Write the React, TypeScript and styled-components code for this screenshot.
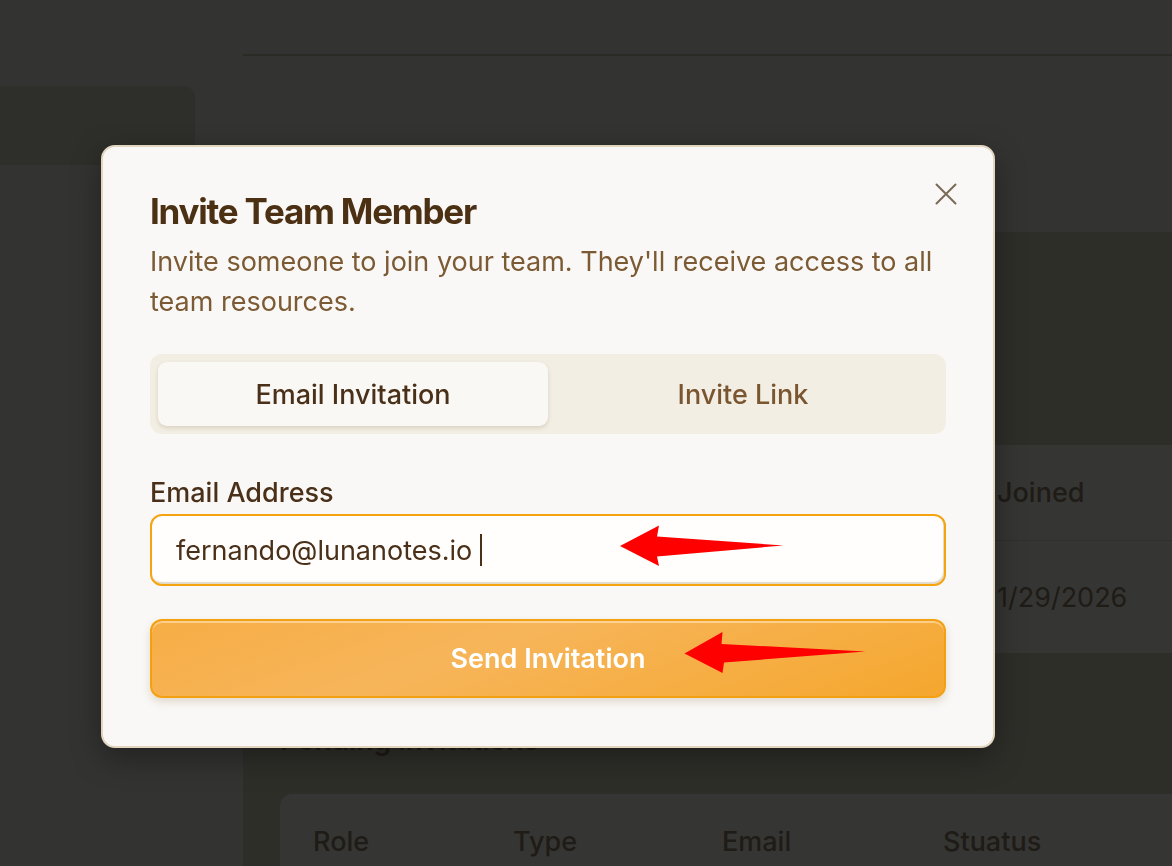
import React from 'react';
import styled, { createGlobalStyle } from 'styled-components';

const GlobalStyle = createGlobalStyle`
  * { box-sizing: border-box; }
  body {
    margin: 0;
    overflow: hidden;
    font-family: Inter, "Noto Sans", sans-serif;
    background: #2e2e29;
  }
`;

const App: React.FC = () => {
  return (
    <>
      <GlobalStyle />
      <Page>
        <Sidebar>
          <NavItem $active />
        </Sidebar>

        <Main>
          <TopBar />
          <Intro />
          <Content>
            {/* members table, mostly hidden behind the dialog */}
            <MembersSection>
              <TableCard>
                <MembersRow $head>
                  <Cell $head />
                  <Cell $head />
                  <Cell $head />
                  <Cell $head>Joined</Cell>
                </MembersRow>
                <MembersRow>
                  <Cell />
                  <Cell />
                  <Cell />
                  <Cell>1/29/2026</Cell>
                </MembersRow>
              </TableCard>
            </MembersSection>

            <PendingSection>
              <SectionTitle>Pending Invitations</SectionTitle>
              <TableCard $gap={33}>
                <PendingRow $head>
                  <Cell $head>Role</Cell>
                  <Cell $head>Type</Cell>
                  <Cell $head>Email</Cell>
                  <Cell $head>Stuatus</Cell>
                </PendingRow>
              </TableCard>
            </PendingSection>
          </Content>
        </Main>
      </Page>

      <Overlay>
        <Modal>
          <CloseButton aria-label="Close">
            <svg width="24" height="24" viewBox="0 0 24 24" fill="none">
              <path d="M2.5 2.5L21.5 21.5M21.5 2.5L2.5 21.5" stroke="#7a6a58" strokeWidth="2" strokeLinecap="round" />
            </svg>
          </CloseButton>

          <Title>Invite Team Member</Title>
          <Description>
            Invite someone to join your team. They'll receive access to all team resources.
          </Description>

          <Tabs>
            <Tab $active>Email Invitation</Tab>
            <Tab>Invite Link</Tab>
          </Tabs>

          <FieldLabel>Email Address</FieldLabel>
          <EmailInput role="textbox">
            fernando@lunanotes.io&nbsp;
            <Caret />
          </EmailInput>

          <SendButton>Send Invitation</SendButton>
        </Modal>
      </Overlay>

      {/* red annotation arrows drawn over the screenshot */}
      <Annotations width="1172" height="866" viewBox="0 0 1172 866">
        <polygon points="620,546 659,525.5 657,536.5 783.5,545.5 657,556.5 659,566" fill="#ff0000" />
        <polygon points="684.5,653.5 722.5,632 721.5,644 865.5,651.5 724,662.5 722.5,673" fill="#ff0000" />
      </Annotations>
    </>
  );
};

const Page = styled.div`
  display: grid;
  grid-template-columns: 243px 1fr;
  height: 866px;
  overflow: hidden;
`;

const Sidebar = styled.aside`
  background: #333331;
  padding-top: 86px;
`;

const NavItem = styled.div<{ $active?: boolean }>`
  width: 195px;
  height: 79px;
  border-radius: 0 12px 12px 0;
  background: ${p => (p.$active ? '#2e2e2a' : 'transparent')};
`;

const Main = styled.main`
  display: flex;
  flex-direction: column;
  min-width: 0;
`;

const TopBar = styled.header`
  height: 56px;
  background: #333331;
  border-bottom: 2px solid #2b2b26;
`;

const Intro = styled.div`
  height: 176px;
  background: #333331;
`;

const Content = styled.div`
  flex: 1;
  background: #2e2e29;
  padding-left: 37px;
`;

const MembersSection = styled.section`
  padding-top: 213px;
`;

const PendingSection = styled.section`
  padding-top: 66px;
`;

const SectionTitle = styled.h2`
  margin: 0;
  font-size: 28px;
  line-height: 42px;
  font-weight: 600;
  color: #1f1b16;
`;

const TableCard = styled.div<{ $gap?: number }>`
  margin-top: ${p => p.$gap ?? 0}px;
  background: #353533;
  border-radius: 12px 0 0 12px;
  padding-left: 33px;
`;

const MembersRow = styled.div<{ $head?: boolean }>`
  display: grid;
  grid-template-columns: 240px 260px 184px 1fr;
  align-items: center;
  height: ${p => (p.$head ? '95px' : '113px')};
  border-top: ${p => (p.$head ? 'none' : '1px solid #2e2e2b')};
`;

const PendingRow = styled(MembersRow)`
  grid-template-columns: 200px 209px 221px 1fr;
`;

const Cell = styled.div<{ $head?: boolean }>`
  font-size: 27px;
  font-weight: ${p => (p.$head ? 500 : 400)};
  color: #1f1b16;
  white-space: nowrap;
`;

const Overlay = styled.div`
  position: fixed;
  inset: 0;
  padding: 145px 0 0 101px;
`;

const Modal = styled.div`
  position: relative;
  width: 894px;
  background: #f9f8f6;
  border: 2px solid #e2d6bf;
  border-radius: 14px;
  padding: 43px 47px 48px;
  box-shadow: 0 10px 30px rgba(0, 0, 0, 0.35);
`;

const CloseButton = styled.button`
  position: absolute;
  top: 35px;
  right: 35px;
  width: 24px;
  height: 24px;
  padding: 0;
  border: none;
  background: none;
  display: flex;
  cursor: pointer;
`;

const Title = styled.h2`
  margin: 0;
  font-size: 35px;
  line-height: 43px;
  font-weight: 700;
  letter-spacing: -0.035em;
  color: #4b3014;
`;

const Description = styled.p`
  margin: 9px 0 0;
  font-size: 27px;
  line-height: 40px;
  color: #7c5a33;
`;

const Tabs = styled.div`
  margin-top: 32px;
  display: grid;
  grid-template-columns: 1fr 1fr;
  padding: 8px;
  height: 80px;
  border-radius: 12px;
  background: #f3eee3;
`;

const Tab = styled.button<{ $active?: boolean }>`
  border: none;
  border-radius: 9px;
  font-family: inherit;
  font-size: 27px;
  font-weight: 500;
  cursor: pointer;
  color: ${p => (p.$active ? '#4a3018' : '#7a5630')};
  background: ${p => (p.$active ? '#faf8f5' : 'transparent')};
  box-shadow: ${p => (p.$active ? '0 2px 4px rgba(90, 60, 20, 0.16)' : 'none')};
`;

const FieldLabel = styled.label`
  display: block;
  margin-top: 42px;
  font-size: 27px;
  line-height: 34px;
  font-weight: 500;
  color: #4a3018;
`;

const EmailInput = styled.div`
  margin-top: 4px;
  height: 72px;
  display: flex;
  align-items: center;
  padding: 0 24px;
  border: 2px solid #f5a30f;
  border-radius: 12px;
  background: #fffefc;
  box-shadow: inset -1px -2px 1px rgba(170, 150, 110, 0.35);
  font-size: 27px;
  color: #4a3018;
  white-space: pre;
`;

const Caret = styled.span`
  width: 2px;
  height: 32px;
  background: #4a3018;
`;

const SendButton = styled.button`
  display: block;
  width: 100%;
  margin-top: 33px;
  height: 79px;
  border: 2px solid #f4a013;
  border-radius: 12px;
  background: linear-gradient(160deg, #f6ad45 0%, #f7b55a 40%, #f5a72e 100%);
  box-shadow: inset 0 2px 0 rgba(255, 230, 190, 0.6), 0 4px 8px rgba(120, 80, 20, 0.18);
  font-family: inherit;
  font-size: 27px;
  font-weight: 600;
  color: #ffffff;
  cursor: pointer;
`;

const Annotations = styled.svg`
  position: fixed;
  top: 0;
  left: 0;
  pointer-events: none;
`;

export default App;
